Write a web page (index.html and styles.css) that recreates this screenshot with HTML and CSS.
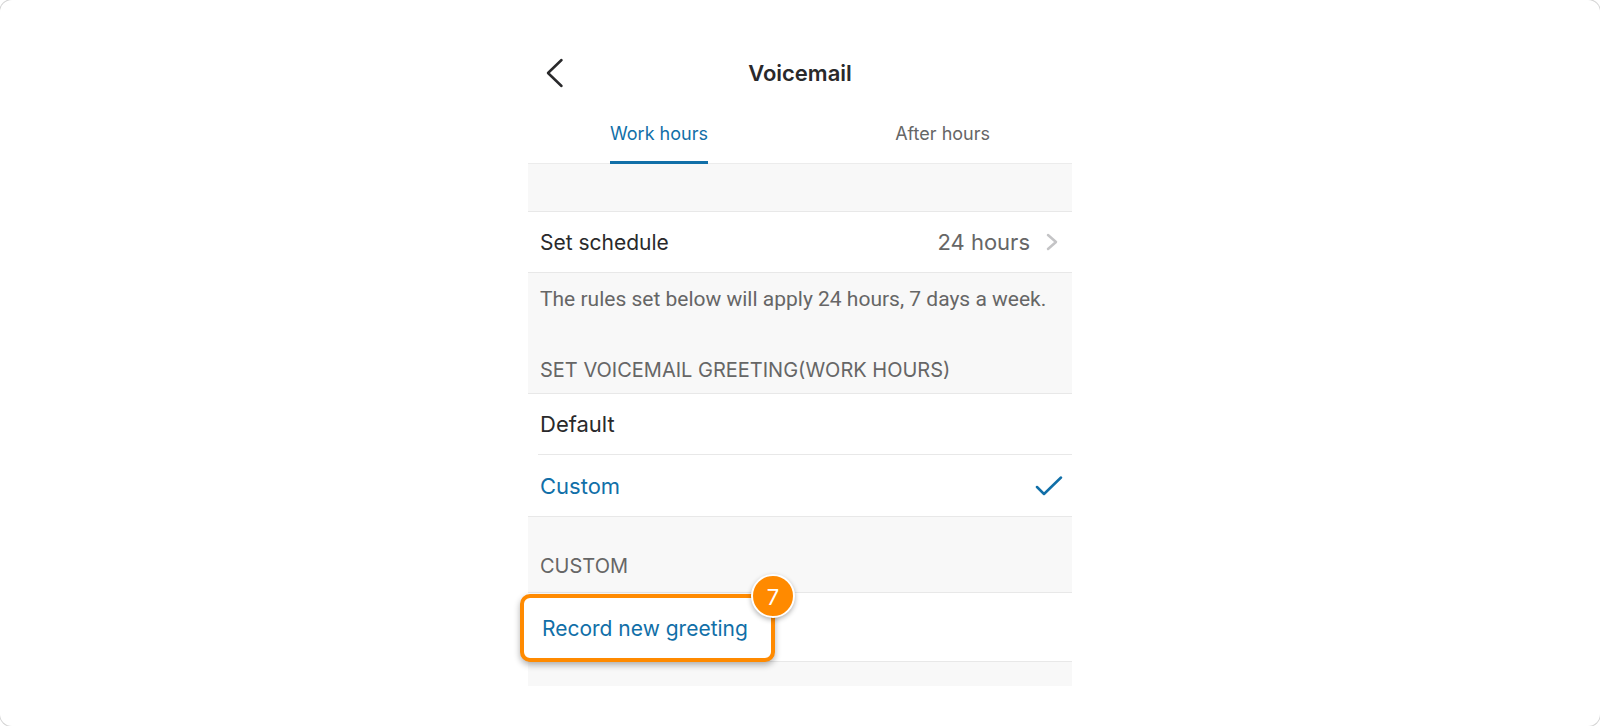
FILE: index.html
```html
<!DOCTYPE html>
<html lang="en">
<head>
    <meta charset="UTF-8">
    <meta name="viewport" content="width=device-width, initial-scale=1.0">
    <title>Voicemail</title>
    <link rel="stylesheet" href="styles.css">
</head>
<body>
    <div class="frame">
        <main class="phone">

            <!-- Header -->
            <header class="topbar">
                <button type="button" class="back" aria-label="Back">
                    <svg width="18" height="30" viewBox="0 0 18 30">
                        <path d="M15.5 2 L2 15 L15.5 28" />
                    </svg>
                </button>
                <h1>Voicemail</h1>
            </header>

            <nav class="tabs">
                <button type="button" class="tab active">Work hours</button>
                <button type="button" class="tab">After hours</button>
            </nav>

            <div class="spacer"></div>

            <!-- Schedule -->
            <button type="button" class="row schedule">
                <span>Set schedule</span>
                <span class="value">24 hours</span>
                <svg class="chevron" width="12" height="18" viewBox="0 0 12 18">
                    <path d="M2 2 L10 9 L2 16" />
                </svg>
            </button>
            <p class="note">The rules set below will apply 24 hours, 7 days a week.</p>

            <!-- Greeting type -->
            <h2 id="greeting-title">SET VOICEMAIL GREETING(WORK HOURS)</h2>
            <div class="options" role="radiogroup" aria-labelledby="greeting-title">
                <label class="row option" for="greeting-default">
                    <input type="radio" name="greeting" id="greeting-default">
                    <span>Default</span>
                    <svg class="check" width="28" height="20" viewBox="0 0 28 20">
                        <path d="M2 11 L9 18 L26 1.5" />
                    </svg>
                </label>
                <label class="row option" for="greeting-custom">
                    <input type="radio" name="greeting" id="greeting-custom" checked>
                    <span>Custom</span>
                    <svg class="check" width="28" height="20" viewBox="0 0 28 20">
                        <path d="M2 11 L9 18 L26 1.5" />
                    </svg>
                </label>
            </div>

            <!-- Custom greeting -->
            <h2 class="custom-title">CUSTOM</h2>
            <div class="record-row">
                <div class="callout">
                    <button type="button" class="record">Record new greeting</button>
                    <span class="step">7</span>
                </div>
            </div>
            <div class="bottom"></div>

        </main>
    </div>
</body>
</html>
```

FILE: styles.css
```css
/* General Reset */
* {
    margin: 0;
    padding: 0;
    box-sizing: border-box;
}

body {
    font-family: Inter, 'Liberation Sans', sans-serif;
    background-color: #fff;
    color: #29292b;
}

button {
    border: none;
    background: none;
    font-family: inherit;
    color: inherit;
    cursor: pointer;
}

svg {
    fill: none;
    stroke-linecap: round;
    stroke-linejoin: round;
}

/* Rounded page frame */
.frame {
    min-height: 100vh;
    padding: 40px 0;
    border-radius: 12px;
    box-shadow: 0 0 0 1px #d4d4d4;
}

.phone {
    width: 100%;
    max-width: 544px;
    margin: 0 auto;
}

/* Header */
.topbar {
    display: grid;
    grid-template-columns: 60px 1fr 60px;
    align-items: center;
    height: 66px;
}

.topbar h1 {
    font-size: 22px;
    font-weight: 600;
    text-align: center;
}

.back {
    display: flex;
    padding-left: 18px;
}

.back svg {
    stroke: #29292b;
    stroke-width: 2.5;
}

/* Tabs */
.tabs {
    display: flex;
    justify-content: space-between;
    height: 58px;
    padding: 0 82px;
    border-bottom: 1px solid #ececec;
}

.tab {
    height: 58px;
    font-size: 18px;
    font-weight: 400;
    color: #666;
    border-bottom: 3px solid transparent;
}

.tab.active {
    color: #116fa8;
    border-bottom-color: #116fa8;
}

/* Grey sections */
.spacer,
.note,
.phone h2,
.bottom {
    background-color: #f8f8f8;
    color: #666;
}

.spacer {
    height: 47px;
}

.note {
    height: 76px;
    padding: 13px 12px 0;
    font-family: Roboto, 'Liberation Sans', sans-serif;
    font-size: 21px;
    line-height: 26px;
}

.phone h2 {
    height: 44px;
    padding: 8px 12px 0;
    font-size: 20px;
    font-weight: 400;
    line-height: 26px;
}

.phone .custom-title {
    height: 75px;
    padding-top: 36px;
}

.bottom {
    height: 24px;
}

/* Rows */
.row {
    display: flex;
    align-items: center;
    width: 100%;
    height: 62px;
    padding: 0 9px 0 12px;
    font-size: 22px;
    text-align: left;
}

.schedule {
    padding-right: 14px;
    border-top: 1px solid #e8e8e8;
    border-bottom: 1px solid #e8e8e8;
    font-size: 21px;
}

.value {
    margin-left: auto;
    margin-right: 16px;
    font-size: 22px;
    color: #666;
}

.chevron {
    stroke: #c4c4c6;
    stroke-width: 2.5;
}

.options {
    border-top: 1px solid #e8e8e8;
    border-bottom: 1px solid #e8e8e8;
}

.option {
    height: 60px;
    cursor: pointer;
}

.option + .option {
    width: auto;
    height: 62px;
    margin-left: 10px;
    padding-left: 2px;
    border-top: 1px solid #e8e8e8;
}

.option input {
    appearance: none;
    width: 0;
    height: 0;
}

.check {
    margin-left: auto;
    stroke: #116fa8;
    stroke-width: 2.5;
    visibility: hidden;
}

.option input:checked ~ span {
    color: #116fa8;
}

.option input:checked ~ .check {
    visibility: visible;
}

/* Highlighted action */
.record-row {
    display: flex;
    height: 70px;
    border-top: 1px solid #e8e8e8;
    border-bottom: 1px solid #e8e8e8;
}

.callout {
    position: relative;
    height: 68px;
    margin: 1px 0 0 -8px;
    background-color: #fff;
    border: 4px solid #ff8a00;
    border-radius: 10px;
    box-shadow: 0 3px 6px rgba(0, 0, 0, 0.3);
}

.record {
    height: 100%;
    padding: 0 23px 0 18px;
    font-size: 21px;
    color: #116fa8;
}

.step {
    position: absolute;
    top: -24px;
    right: -24px;
    width: 44px;
    height: 44px;
    border: 2px solid #fff;
    border-radius: 50%;
    background-color: #ff8a00;
    box-shadow: 0 2px 5px rgba(0, 0, 0, 0.3);
    color: #fff;
    font-size: 22px;
    line-height: 42px;
    text-align: center;
}
```
